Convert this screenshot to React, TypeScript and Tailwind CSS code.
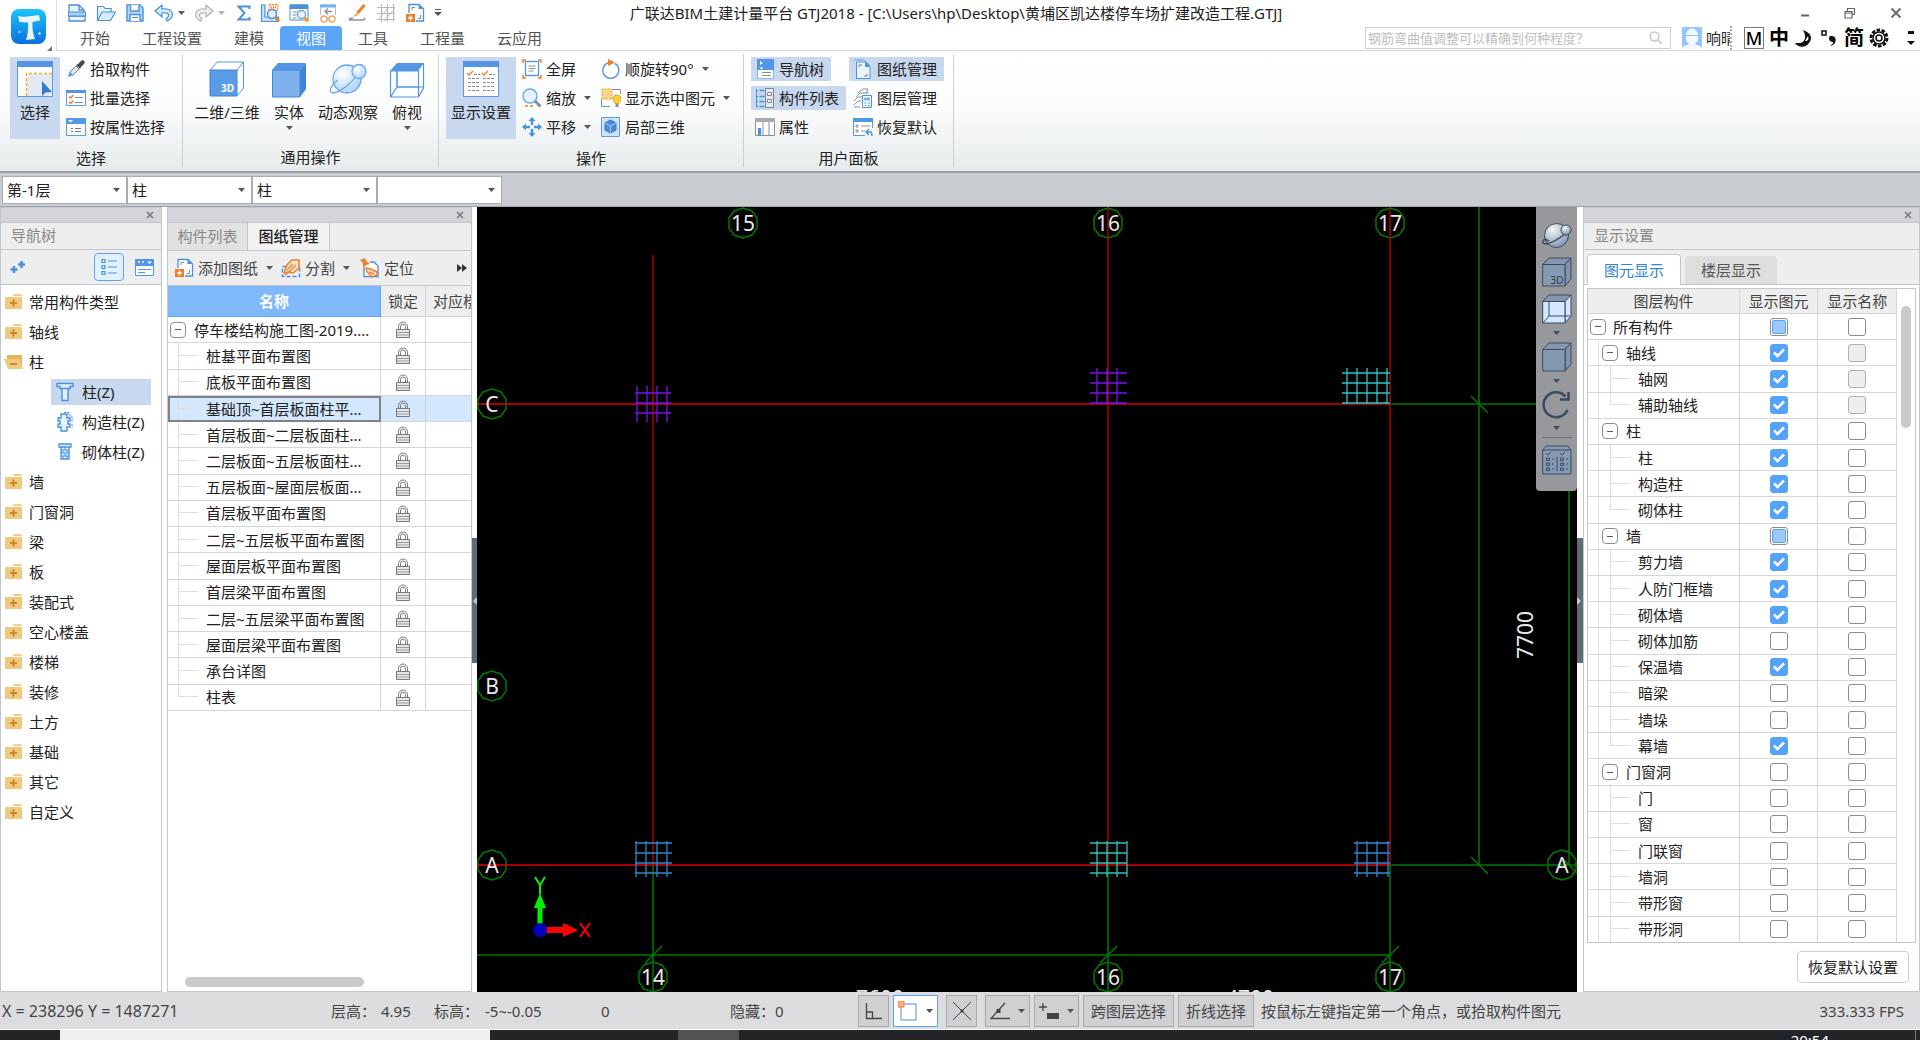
import { useState } from "react";
import type { ReactNode } from "react";

const BLUE = "#4a90dc";
const ORANGE = "#f07d28";

/* ---------- icons ---------- */

function Svg({ w = 20, h = 20, box, children }: { w?: number; h?: number; box?: string; children: ReactNode }) {
	return (
		<svg width={w} height={h} viewBox={box ?? `0 0 ${w} ${h}`} fill="none" className="shrink-0" aria-hidden="true">
			{children}
		</svg>
	);
}

function Caret({ color = "#555555" }: { color?: string }) {
	return (
		<Svg w={7} h={4}>
			<path d="M0 0h7L3.500 4z" fill={color} />
		</Svg>
	);
}

const Logo = () => (
	<Svg w={36} h={36}>
		<defs>
			<linearGradient id="logo" x1="0" y1="0" x2="0" y2="1">
				<stop offset="0" stopColor="#1cc4fa" />
				<stop offset="1" stopColor="#0b6fe0" />
			</linearGradient>
		</defs>
		<rect width="35" height="35" rx="8" fill="url(#logo)" />
		<path d="M7 7c6 1.500 14 0 21-1l1 5.500-7.500 1.500c-.5 5 .5 12 2.500 17l-9 1c2-6 2.500-12 2-17.500L8.500 13z" fill="#e9f5ff" />
		<circle cx="8.500" cy="23" r="1" fill="#d8efff" />
		<circle cx="28.500" cy="24.500" r="1.200" fill="#d8efff" />
	</Svg>
);

const NewFileIcon = () => (
	<Svg>
		<path d="M2 9V2h10l5 5v2M12 2v5h5" stroke={BLUE} fill="#eaf4ff" strokeWidth="1.300" />
		<path d="M2 13h16v5H2z" fill="#eaf4ff" stroke={BLUE} strokeWidth="1.300" />
		<rect x="1.500" y="9" width="17" height="4" fill="#a8d0fa" stroke={BLUE} />
	</Svg>
);
const OpenIcon = () => (
	<Svg>
		<path d="M1.500 17V3.500h6l1.500 2h6V9" stroke={BLUE} fill="#eaf4ff" strokeWidth="1.200" />
		<path d="M1.500 17.500 6 9h13.500l-5 8.500z" stroke={BLUE} fill="#d8eafd" strokeWidth="1.200" />
	</Svg>
);
const SaveIcon = () => (
	<Svg>
		<path d="M2 2h13l3 3v13H2z" fill="#b5d7fb" stroke={BLUE} strokeWidth="1.400" />
		<path d="M5.500 2v6h8.500V2M5 18v-6.500h10V18" fill="#fff" stroke={BLUE} strokeWidth="1.400" />
		<path d="M7 14.500h6" stroke={BLUE} />
	</Svg>
);
const UndoIcon = ({ color = BLUE, fill = "#d3e8fd" }: { color?: string; fill?: string }) => (
	<Svg>
		<path d="M1 8 8 2v4c6-1 10 1.500 10.500 5 0 4-3 6-5.500 7l-1-2.500c2-1 3-2.500 2.500-4-.5-1.500-3-2-6.500-1.500V14z" fill={fill} stroke={color} strokeWidth="1.200" />
	</Svg>
);
const RedoIcon = () => (
	<Svg>
		<g transform="matrix(-1 0 0 1 20 0)">
			<path d="M1 8 8 2v4c6-1 10 1.500 10.500 5 0 4-3 6-5.500 7l-1-2.500c2-1 3-2.500 2.500-4-.5-1.500-3-2-6.500-1.500V14z" fill="#ececec" stroke="#b4b4b4" strokeWidth="1.200" />
		</g>
	</Svg>
);
const SumIcon = () => (
	<Svg w={14} h={16}>
		<path d="M12.500 4V1.500H1.500L7.500 8l-6 6.500h11V12" stroke={BLUE} strokeWidth="2" />
	</Svg>
);
const CraneIcon = () => (
	<Svg>
		<path d="M1.500 2v16.500h17V14H5V2z" fill="#c9e1fb" stroke={BLUE} strokeWidth="1.200" />
		<path d="M9 1.500h9v6H9z" fill="#fde5d2" stroke={ORANGE} strokeDasharray="2 1" />
		<path d="M11 4.500h5" stroke={ORANGE} strokeWidth="1.500" strokeDasharray="1 1" />
		<circle cx="12" cy="11" r="4.500" fill="#ddeeff" stroke={BLUE} strokeWidth="1.500" />
		<path d="m15.500 14.500 3.500 3.500" stroke={ORANGE} strokeWidth="3" />
	</Svg>
);
const FindWindowIcon = () => (
	<Svg>
		<path d="M1 2h18v15H1z" fill="#fff" stroke={BLUE} />
		<path d="M1 1.500h18V6H1z" fill={BLUE} />
		<path d="M3.500 9h5M3.500 12h4M3.500 15h4" stroke="#8a8f96" />
		<circle cx="12.500" cy="11.500" r="4" fill="#e4f1ff" stroke="#7fa6d6" strokeWidth="1.500" />
		<path d="m15.500 14.500 3.500 4" stroke="#f59a1c" strokeWidth="3" />
	</Svg>
);
const GlassesIcon = () => (
	<Svg>
		<path d="M2.500 12V2h15v10" fill="#fff" stroke="#9cc3ef" />
		<path d="M2 1.500h16v3H2z" fill="#79b0ee" />
		<path d="M14 8.500H7m3-3-3 3 3 3" stroke="#8a8f96" strokeWidth="1.300" />
		<circle cx="6" cy="16" r="3" stroke="#f6a673" strokeWidth="1.500" fill="#fff" />
		<circle cx="14" cy="16" r="3" stroke="#f6a673" strokeWidth="1.500" fill="#fff" />
		<path d="M9 16h2" stroke="#f6a673" strokeWidth="1.500" />
	</Svg>
);
const BrushIcon = () => (
	<Svg>
		<path d="m17.500 2-7 8" stroke={ORANGE} strokeWidth="3" />
		<path d="m10 9.500-4 4.500 5-2z" fill="#f5a623" />
		<path d="M6 15c-3 0-5 2-3 2h13c2 0 2-1 1-2" stroke="#8a8f96" strokeWidth="1.500" />
	</Svg>
);
const MeshIcon = () => (
	<Svg>
		<path d="M5.500 1v18M11.500 1v18M17.500 1v18M1 4.500h18M1 10.500h18M1 16.500h18M2 17 12 5M8 18 19 5" stroke="#b9b9b9" />
	</Svg>
);
const AddSheetIcon = () => (
	<Svg>
		<path d="M4 10V1.500h10l4.500 4.500v12H11" fill="#fff" stroke={BLUE} strokeWidth="1.300" />
		<path d="M13.500 1.500V6h5z" fill={BLUE} />
		<path d="M7 7V4.500h3M15.500 12v3.500H13" stroke="#7f8b99" />
		<path d="M1 11h9v8H1z" fill={ORANGE} />
		<path d="M5.500 12.500v5M3 15h5" stroke="#fff" strokeWidth="1.400" />
	</Svg>
);

const SelectBigIcon = () => (
	<Svg w={38} h={38}>
		<path d="M1.500 1.500h35v35h-35z" fill="#fdfdfd" stroke="#5b9be6" />
		<path d="M1 1h36v6H1z" fill="#5296e5" />
		<path d="M11 14h25v22H11z" fill="#e4e9f4" />
		<path d="M10.500 36V13.500H36" stroke="#f0b323" strokeWidth="1.500" strokeDasharray="3 2" />
		<path d="M26 21v15l3.500-3.500L36 32z" fill="#2f7bd0" />
	</Svg>
);
const DisplayBigIcon = () => (
	<Svg w={38} h={38}>
		<path d="M1.500 1.500h35v35h-35z" fill="#fff" stroke="#5b9be6" />
		<path d="M1 1h36v6H1z" fill="#5296e5" />
		<path d="m5 13 2 2 4-4M20 13l2 2 4-4" stroke={ORANGE} strokeWidth="1.300" />
		<path d="M12 14.500h6M27 14.500h6M6 18.500h12M21 18.500h12M6 22.500h12M21 22.500h12M6 26.500h12M21 26.500h12M6 30.500h12M21 30.500h12" stroke="#8a8f96" strokeDasharray="3 1" />
	</Svg>
);
const Cube3DIcon = () => (
	<Svg w={36} h={38}>
		<path d="M1.500 10 8 2h26.500v26L28 36" fill="#fff" stroke="#5296e5" />
		<path d="M28 10 34.500 2" stroke="#5296e5" />
		<path d="M1 10h27v26H1z" fill="#5a9be8" stroke="#3f84d6" />
		<text x="12" y="32" fontSize="10" fontWeight="700" fill="#fff">3D</text>
	</Svg>
);
const CubeSolidIcon = () => (
	<Svg w={36} h={38}>
		<path d="M1 10 7 3h28l-6 7z" fill="#5296e5" />
		<path d="m29 10 6-7v26l-6 8z" fill="#3f84d6" />
		<path d="M1.500 10H29v27H1.500z" fill="#7fb1ed" stroke="#4289dc" />
	</Svg>
);
const OrbitIcon = () => (
	<Svg w={38} h={32}>
		<defs>
			<radialGradient id="orb" cx=".35" cy=".3" r=".8">
				<stop offset="0" stopColor="#ffffff" />
				<stop offset="1" stopColor="#a9d0fa" />
			</radialGradient>
		</defs>
		<circle cx="18" cy="16" r="14" fill="url(#orb)" stroke="#69a6ea" strokeWidth="1.300" />
		<path d="M28 12c-6 9-17 17-24 18-6-1-1-9 5-13" stroke="#69a6ea" strokeWidth="1.300" />
		<circle cx="30" cy="8.500" r="7" fill="url(#orb)" stroke="#69a6ea" strokeWidth="1.300" />
	</Svg>
);
const TopViewIcon = () => (
	<Svg w={36} h={38}>
		<path d="M1.500 11h28v26h-28zM34.500 3v25l-5 9M8 4v23h26M8 27l-6.500 10" fill="#fff" stroke="#5296e5" strokeWidth="1.200" />
		<path d="M8 11v16h21" stroke="#5296e5" />
		<path d="M1 11 8 3h27l-6 8z" fill="#5296e5" />
	</Svg>
);

const PickerIcon = () => (
	<Svg>
		<path d="m3 17 1-4 6-6 3 3-6 6z" fill="#dfe7ef" stroke="#777c82" />
		<path d="m2 18 2-5 3 3z" fill="#4ea3e8" />
		<path d="m10 6 2-1 3-3c2-2 5 1 3 3l-3 3-1 2z" fill="#444a50" />
	</Svg>
);
const BatchIcon = () => (
	<Svg>
		<path d="M.5 2.500h19v15H.5z" fill="#fff" stroke="#5b9be6" />
		<path d="M0 2h20v3H0z" fill="#5296e5" />
		<path d="m3 8.500 1.500 1.500L7.500 7M3 14l1.500 1.500 3-3" stroke={ORANGE} strokeWidth="1.300" />
		<path d="M9 9.500h8M9 14.500h8" stroke="#8a8f96" />
	</Svg>
);
const ByPropIcon = () => (
	<Svg>
		<path d="M.5 1.500h19v17H.5z" fill="#fff" stroke="#5b9be6" />
		<path d="M0 1h20v6H0z" fill="#5296e5" />
		<path d="M2 3h5L4.500 5.500z" fill="#fff" />
		<path d="M5 11.500h2M9 11.500h6M5 14.500h2M9 14.500h6" stroke="#777" />
	</Svg>
);
const FullScreenIcon = () => (
	<Svg>
		<path d="M1 4V1h3M16 1h3v3M19 16v3h-3M4 19H1v-3" stroke={ORANGE} strokeWidth="1.500" />
		<path d="M3.500 2.500h13v14h-13z" fill="#fff" stroke="#5b9be6" strokeWidth="1.300" />
		<path d="M6.500 7h7M6.500 9.500h7M6.500 12h5" stroke="#8a8f96" />
	</Svg>
);
const ZoomIcon = () => (
	<Svg>
		<circle cx="8" cy="8" r="7" fill="#e6f2ff" stroke="#6aa6ea" strokeWidth="1.400" />
		<path d="m13 13 5.500 5.500" stroke="#878c92" strokeWidth="3" />
		<path d="M3 18h3M8 18h3" stroke={ORANGE} strokeWidth="1.500" />
	</Svg>
);
const PanIcon = () => (
	<Svg>
		<path d="m10 0 3.500 4h-7zM10 20l3.500-4h-7zM0 10l4-3.500v7zM20 10l-4-3.500v7z" fill={BLUE} />
		<path d="M10 3v5M10 12v5M3 10h5M12 10h5" stroke={BLUE} strokeWidth="2.500" />
	</Svg>
);
const RotateIcon = () => (
	<Svg>
		<path d="M8 3.500a8 8 0 1 0 6 1" stroke="#5b9be6" strokeWidth="1.500" />
		<path d="M7 0v7l7-3.500z" fill={ORANGE} />
	</Svg>
);
const ShowSelIcon = () => (
	<Svg>
		<path d="M10 1.500h9.500V6M.5 11v7.500H9" stroke="#8a8f96" />
		<path d="M1 1h10v10H1z" fill="#fbd58b" stroke="#e9a53a" strokeDasharray="2 1" />
		<path d="M16 7a4 4 0 0 1 2 7.500v1h-4v-1A4 4 0 0 1 16 7z" fill="#ffcd3c" stroke="#e0a521" />
		<path d="M14.500 16h3v3h-3z" fill="#8a8f96" />
	</Svg>
);
const LocalCubeIcon = () => (
	<Svg>
		<path d="M.5.5h18v19H.5z" fill="#cfe2f8" stroke="#5b9be6" />
		<path d="m9.500 3 5.500 3v7l-5.500 3L4 13V6z" fill="#4a8edb" stroke="#2f73c2" />
		<path d="m4 6 5.500 3L15 6M9.500 9v7" stroke="#a9cdf5" />
	</Svg>
);
const NavTreeIcon = () => (
	<Svg>
		<path d="M2.500.5h16v19h-16z" fill="#fff" stroke="#8ab6ea" />
		<path d="M2 0h17v11H2z" fill="#5296e5" />
		<path d="m5 2 3 2-3 2zM4.500 8.500h4l-2 2z" fill="#fff" />
		<path d="M7 13.500h9M7 16.500h9" stroke="#8a8f96" />
	</Svg>
);
const ListPanelIcon = () => (
	<Svg>
		<path d="M10.500.5h8v19h-8z" fill="#e8eaee" stroke="#7d858f" />
		<path d="M1.500 1v18M1 2.500h2M1 8.500h2M1 13.500h2M1 18.500h2" stroke={BLUE} />
		<path d="M4.500 2.500h5M4.500 8.500h5M4.500 13.500h5M4.500 18.500h5" stroke={BLUE} strokeWidth="1.500" />
		<path d="M12.500 4.500h4v3h-4zM12.500 11.500h4v3h-4z" fill="#fff" stroke="#7d858f" />
	</Svg>
);
const PropIcon = () => (
	<Svg>
		<path d="M.5 1.500h19v17H.5z" fill="#fff" stroke="#8a8f96" />
		<path d="M0 1h20v4H0z" fill="#a7abb1" />
		<path d="M8 5v13M14 5v13" stroke="#8a8f96" />
		<path d="M3 11h3v7H3z" fill={BLUE} />
	</Svg>
);
const SheetMgrIcon = () => (
	<Svg>
		<path d="M1.500 1h9l6 5v12h-4" fill="#d5e7fb" stroke="#5b9be6" />
		<path d="M3.500 3h9l4.500 5v11.500H3.500z" fill="#eaf4ff" stroke={BLUE} />
		<path d="M12 3v5h5z" fill={BLUE} />
		<path d="M6 8V6h3M14 15v2h-3" stroke="#7d858f" />
	</Svg>
);
const LayerMgrIcon = () => (
	<Svg>
		<path d="m5 5 5-4h5l-2 4M3 9l4-4h9M1 13l4-4h5M1 17l4-4h3M1 19h6" stroke="#8a8f96" />
		<path d="M9.500 7.500h9v12h-9z" fill="#fff" stroke={BLUE} />
		<path d="M11 9.500h6v3h-6z" fill="#7fb1ed" />
		<path d="M11.500 15h2M15 15h2M11.500 17.500h2M15 17.500h2" stroke={BLUE} />
	</Svg>
);
const ResetIcon = () => (
	<Svg>
		<path d="M19.500 11V1.500H.5v17H12" fill="#fff" stroke="#5b9be6" />
		<path d="M0 1h20v4H0z" fill="#5296e5" />
		<path d="M3 8h2v2H3zM3 13h2v2H3zM8 9h9M8 14h4" stroke="#8a8f96" />
		<path d="M14 15h3.500c1.500 0 1.500 2 1.500 4M16 12l-3 3 3 3" stroke={BLUE} strokeWidth="1.400" />
	</Svg>
);

const SplitIcon = () => (
	<Svg>
		<path d="M1.500 8.500h17v10h-17z" stroke={BLUE} strokeDasharray="4 2" strokeWidth="1.500" />
		<path d="m3 15 3-8 5-5h7v8l-6 5-5-1z" fill="#ffe3cd" stroke={ORANGE} strokeWidth="1.500" />
		<path d="m6 12 6-6M8 14l7-7M4 17l5-4" stroke={ORANGE} strokeWidth="1.300" />
	</Svg>
);
const LocateIcon = () => (
	<Svg>
		<path d="M4 9v9.500h14V8l-4-4h-4" fill="#fff" stroke={BLUE} strokeWidth="1.300" />
		<path d="m0 2 5-2 1 3 4 3-4 1-3 3V5z" fill={ORANGE} />
		<path d="m6 10 5 1 6 3v3l-5 2-5-5zM9 14l5 2" fill="#ffe3cd" stroke={ORANGE} strokeWidth="1.400" />
	</Svg>
);

function FolderIcon({ open }: { open?: boolean }) {
	if (open) {
		return (
			<Svg w={20} h={16}>
				<path d="M3 5V1h15v13z" fill="#e3b45c" />
				<path d="M0 5h16l3 10H4z" fill="#f0c97f" />
				<path d="M6 10h7" stroke="#b9812b" strokeWidth="1.600" />
			</Svg>
		);
	}
	return (
		<Svg w={20} h={16}>
			<path d="m9 1 1-1h7l1 1v1H9z" fill="#f3cd8a" />
			<path d="M1 3h17v12H1z" fill="#f0c97f" />
			<path d="M9.500 5.500v7M6 9h7" stroke="#c48a2c" strokeWidth="2" />
		</Svg>
	);
}
const ColumnIcon = () => (
	<Svg w={18} h={20}>
		<path d="M1 1.500h16v3h-3v2H4v-2H1zM6 6.500h6v12H6z" fill="#e6f1fd" stroke={BLUE} strokeWidth="1.400" />
	</Svg>
);
const TieColumnIcon = () => (
	<Svg w={18} h={20}>
		<path d="M5 2h6v4h3v3h-2v3h2v3h-3v4H5v-4H2v-3h2V9H2V6h3z" fill="#e6f1fd" stroke={BLUE} strokeWidth="1.400" />
		<path d="M8 .5h5V4h3v6M16 12v4" stroke={BLUE} strokeDasharray="2 1" />
	</Svg>
);
const BrickColumnIcon = () => (
	<Svg w={18} h={20}>
		<path d="M3 2h12v3H3zM5 5h8v12H5z" fill="#e6f1fd" stroke={BLUE} strokeWidth="1.300" />
		<path d="M5 8h8M5 11h8M5 14h8M9 5v3M7 8v3M11 8v3M9 11v3M7 14v3M11 14v3" stroke={BLUE} />
	</Svg>
);
const LockIcon = () => (
	<Svg w={14} h={17}>
		<path d="M2.500 8V5.500a4.500 4.500 0 0 1 9 0V8M4.500 8V5.500a2.500 2.500 0 0 1 5 0V8" stroke="#77797c" />
		<path d="M.5 8.500h13v8H.5z" fill="#e6e6e8" stroke="#77797c" />
		<path d="M1 11.500h12M1 14h12" stroke="#9a9c9f" />
	</Svg>
);

const DARK = "#3b4a5e";
const GrayCube = ({ text, wire }: { text?: string; wire?: boolean }) => (
	<Svg w={30} h={30}>
		<path d="M.7 7.500 7 1h22L23 7.500z" fill="#8496af" stroke={DARK} />
		<path d="M23 7.500 29 1v21l-6 7z" fill={wire ? "#d3e8ff" : "#8093ac"} stroke={DARK} />
		<path d="M.7 7.500H23V29H.7z" fill={wire ? "#d3e8ff" : "#8699b3"} stroke={DARK} />
		{wire && <path d="M7 8v14h21M7 22l-6 7" stroke={DARK} />}
		{text && <text x="8.500" y="26.500" fontSize="10" fill="#2e3a4a">{text}</text>}
	</Svg>
);
const GrayOrbit = () => (
	<Svg w={30} h={27}>
		<defs>
			<radialGradient id="gorb" cx=".35" cy=".25" r=".8">
				<stop offset="0" stopColor="#f5f7fa" />
				<stop offset="1" stopColor="#7e92ac" />
			</radialGradient>
		</defs>
		<circle cx="14.500" cy="13.500" r="12" fill="url(#gorb)" stroke={DARK} />
		<path d="M24 11C17 17 9 21 4 22c-4 0-4-3-1-5l4 2" stroke={DARK} strokeWidth="1.400" />
		<circle cx="24" cy="8" r="5" fill="url(#gorb)" stroke={DARK} />
	</Svg>
);
const GrayRotate = () => (
	<Svg w={30} h={29}>
		<path d="M23.500 6.500A12.500 12.500 0 1 0 25.500 20" stroke={DARK} strokeWidth="2.500" />
		<path d="M26.500 2v7.500H18" stroke={DARK} strokeWidth="2.500" />
	</Svg>
);
const GraySettings = () => (
	<Svg w={30} h={30}>
		<path d="M.7 5 4 1h22l3 4v24H.7z" fill="#8699b3" stroke={DARK} />
		<path d="M1 5h28M15 12v14M4 8l2 2 3-3M18 8l2 2 3-3" stroke={DARK} />
		<path d="M4.500 13h3v2.500h-3zM4.500 18h3v2.500h-3zM4.500 23h3v2.500h-3zM18.500 13h3v2.500h-3zM18.500 18h3v2.500h-3zM18.500 23h3v2.500h-3zM10 14h2M10 19h2M10 24h2M24 14h2M24 19h2M24 24h2" stroke={DARK} />
	</Svg>
);

/* ---------- header ---------- */

const tabs = ["开始", "工程设置", "建模", "视图", "工具", "工程量", "云应用"];

function IconButton({ label, children }: { label: string; children: ReactNode }) {
	return (
		<button type="button" aria-label={label} className="flex h-5 items-center justify-center">
			{children}
		</button>
	);
}

function Header() {
	const [tab, setTab] = useState("视图");
	return (
		<header className="flex h-[51px] shrink-0 bg-white">
			<div className="flex w-[57px] shrink-0 items-end border-r border-[#dcdcdc]">
				<div className="ml-[11px] mb-1.5">
					<Logo />
				</div>
				<Svg w={5} h={5}>
					<path d="M5 0v5H0z" fill="#777" />
				</Svg>
			</div>
			<div className="flex min-w-0 flex-1 flex-col border-b border-[#dadada]">
				<div className="flex h-[27px] items-center">
					<div className="flex flex-1 items-center pl-2.5">
						<div className="flex items-center gap-[9px]">
							<IconButton label="新建"><NewFileIcon /></IconButton>
							<IconButton label="打开"><OpenIcon /></IconButton>
							<IconButton label="保存"><SaveIcon /></IconButton>
							<div className="flex items-center gap-1">
								<IconButton label="撤销"><UndoIcon /></IconButton>
								<Caret />
							</div>
							<div className="flex items-center gap-1">
								<IconButton label="恢复"><RedoIcon /></IconButton>
								<Caret color="#b5b5b5" />
							</div>
						</div>
						<div className="ml-3 flex items-center gap-[9px]">
							<IconButton label="汇总"><SumIcon /></IconButton>
							<IconButton label="查看构件"><CraneIcon /></IconButton>
							<IconButton label="查找"><FindWindowIcon /></IconButton>
							<IconButton label="查看"><GlassesIcon /></IconButton>
							<IconButton label="格式刷"><BrushIcon /></IconButton>
							<IconButton label="轴网"><MeshIcon /></IconButton>
							<IconButton label="添加图纸"><AddSheetIcon /></IconButton>
							<IconButton label="自定义快速访问">
								<Svg w={8} h={8}>
									<path d="M1 .5h6" stroke="#555" />
									<path d="M0 3h8L4 7z" fill="#555" />
								</Svg>
							</IconButton>
						</div>
					</div>
					<h1 className="whitespace-nowrap pr-[57px] text-[15px] leading-6 text-[#222]">
						广联达BIM土建计量平台 GTJ2018 - [C:\Users\hp\Desktop\黄埔区凯达楼停车场扩建改造工程.GTJ]
					</h1>
					<div className="flex flex-1 items-center justify-end gap-[35px] pr-[18px]">
						<button type="button" aria-label="最小化" className="flex">
							<Svg w={8} h={10}><path d="M0 7.500h8" stroke="#666" strokeWidth="2" /></Svg>
						</button>
						<button type="button" aria-label="还原" className="flex">
							<Svg w={11} h={12}><path d="M3.500 4V1.500h7v6H8M1 4.500h7V11H1zM1 6h7" stroke="#666" strokeWidth="1.200" /></Svg>
						</button>
						<button type="button" aria-label="关闭" className="flex">
							<Svg w={12} h={12}><path d="m1.500 1.500 9 9m0-9-9 9" stroke="#666" strokeWidth="1.800" /></Svg>
						</button>
					</div>
				</div>
				<div className="flex h-6 items-center">
					<nav className="flex flex-1 self-stretch pl-[7px]" role="tablist">
						{tabs.map((t) => (
							<button
								key={t}
								type="button"
								role="tab"
								aria-selected={t === tab}
								onClick={() => setTab(t)}
								className={
									t === tab
										? "rounded-t-sm bg-[#5aa5f7] px-4 text-[15px] leading-6 text-white"
										: "px-4 text-[15px] leading-6 text-[#555]"
								}
							>
								{t}
							</button>
						))}
					</nav>
					<label className="flex h-[22px] w-[306px] items-center border border-[#cfcfcf] bg-white pr-2">
						<input
							type="text"
							aria-label="搜索"
							placeholder="钢筋弯曲值调整可以精确到何种程度？"
							className="min-w-0 flex-1 pl-0.5 text-[13px] leading-5 outline-none placeholder:text-[#bdbdbd]"
						/>
						<Svg w={13} h={14}>
							<circle cx="5.500" cy="5.500" r="4.500" stroke="#c4c4c4" strokeWidth="1.400" />
							<path d="m9 9 3.500 4" stroke="#c4c4c4" strokeWidth="1.600" />
						</Svg>
					</label>
					<div className="ml-[11px] flex h-6 w-12 items-center gap-1 overflow-hidden">
						<Svg w={20} h={22}>
							<path d="M0 0h20v22H0z" fill="#93c7ff" />
							<path d="M4 9c0-10 12-10 12 0v3c0 3-3 4-3 5l7 3v2H0v-2l7-3c0-1-3-2-3-5z" fill="#f2f8ff" />
							<path d="M4 8.500h12" stroke="#93c7ff" />
						</Svg>
						<span className="whitespace-nowrap text-[15px] leading-5 text-[#222]">响晴</span>
					</div>
					<div className="flex h-6 w-[190px] items-center gap-[5px] border-l-2 border-dotted border-[#aaa] pl-3 text-lg leading-6 font-medium text-black">
						<span className="h-[22px] w-5 border border-[#777] text-center leading-5">M</span>
						<span className="w-5 text-center text-xl leading-6 font-bold">中</span>
						<Svg w={20} h={20}><path d="M9 2c8 3 10 8 6 13-3 5-11 5-14 0h5c5-1 7-6 3-13z" fill="#111" /><path d="m11 13 3-5c1 3 0 5-3 5z" fill="#fff" /></Svg>
						<Svg w={20} h={20}><path d="M3 3h4v4H3z" stroke="#111" strokeWidth="1.500" /><path d="M11 8c8-1 7 8 1 10-1-1 3-2 2-4-4 0-5-4-3-6z" fill="#111" /></Svg>
						<span className="w-5 text-center text-xl leading-6 font-bold">简</span>
						<Svg w={20} h={20}>
							<circle cx="10" cy="10" r="8" stroke="#111" strokeWidth="3" strokeDasharray="3.500 1.500" />
							<circle cx="10" cy="10" r="6" stroke="#111" strokeWidth="1.500" />
							<circle cx="10" cy="10" r="3" stroke="#111" strokeWidth="1.500" />
						</Svg>
						<span className="flex-1" />
						<span className="mr-1 flex">
							<Svg w={10} h={18}><path d="M2 3.500h6" stroke="#111" strokeWidth="3" /><path d="M1 12h8l-4 4z" fill="#111" /></Svg>
						</span>
					</div>
				</div>
			</div>
		</header>
	);
}

/* ---------- ribbon ---------- */

function Group({ label, className, children }: { label: string; className: string; children: ReactNode }) {
	return (
		<section className={`flex shrink-0 flex-col border-r border-[#cdd0d2] pt-[3px] ${className}`}>
			<div className="flex h-[84px]">{children}</div>
			<div className="mt-[9px] text-center text-[15px] leading-5 text-[#222]">{label}</div>
		</section>
	);
}

function BigButton({ icon, label, active, caret, className }: { icon: ReactNode; label: string; active?: boolean; caret?: boolean; className: string }) {
	return (
		<button
			type="button"
			aria-pressed={!!active}
			className={`flex flex-col items-center pt-[3px] text-[15px] text-[#222] ${active ? "bg-[#c8d8ef]" : ""} ${className}`}
		>
			<span className="flex h-[38px] items-center">{icon}</span>
			<span className="mt-1 whitespace-nowrap leading-5">{label}</span>
			{caret && <span className="mt-1"><Caret /></span>}
		</button>
	);
}

function SmallButton({ icon, label, active, caret, wide }: { icon: ReactNode; label: string; active?: boolean; caret?: boolean; wide?: boolean }) {
	return (
		<button
			type="button"
			aria-pressed={!!active}
			className={`flex h-6 items-center gap-1 text-[15px] leading-6 whitespace-nowrap text-[#222] ${active ? "bg-[#c8d8ef]" : ""} ${wide ? "pl-1 pr-[7px]" : "px-0.5"}`}
		>
			{icon}
			<span>{label}</span>
			{caret && <span className="ml-1"><Caret /></span>}
		</button>
	);
}

function Ribbon() {
	return (
		<div className="flex h-[122px] shrink-0 border-b-2 border-[#9da1a6] bg-linear-to-b from-white via-[#fbfcfc] to-[#e6ebeb] pt-[3px] pb-1">
			<Group label="选择" className="w-[183px]">
				<div className="flex pl-2.5">
					<BigButton icon={<SelectBigIcon />} label="选择" active className="w-[50px]" />
					<div className="ml-1 flex flex-col items-start gap-[5px]">
						<SmallButton icon={<PickerIcon />} label="拾取构件" />
						<SmallButton icon={<BatchIcon />} label="批量选择" />
						<SmallButton icon={<ByPropIcon />} label="按属性选择" />
					</div>
				</div>
			</Group>
			<Group label="通用操作" className="w-64">
				<div className="flex gap-[7px] pl-[11px]">
					<BigButton icon={<Cube3DIcon />} label="二维/三维" className="w-[66px]" />
					<BigButton icon={<CubeSolidIcon />} label="实体" caret className="w-11" />
					<BigButton icon={<OrbitIcon />} label="动态观察" className="w-[60px]" />
					<BigButton icon={<TopViewIcon />} label="俯视" caret className="w-11" />
				</div>
			</Group>
			<Group label="操作" className="w-[305px]">
				<div className="flex pl-[7px]">
					<BigButton icon={<DisplayBigIcon />} label="显示设置" active className="w-[70px]" />
					<div className="ml-1 flex w-[79px] flex-col items-start gap-[5px]">
						<SmallButton icon={<FullScreenIcon />} label="全屏" />
						<SmallButton icon={<ZoomIcon />} label="缩放" caret />
						<SmallButton icon={<PanIcon />} label="平移" caret />
					</div>
					<div className="flex flex-col items-start gap-[5px]">
						<SmallButton icon={<RotateIcon />} label="顺旋转90°" caret />
						<SmallButton icon={<ShowSelIcon />} label="显示选中图元" caret />
						<SmallButton icon={<LocalCubeIcon />} label="局部三维" />
					</div>
				</div>
			</Group>
			<Group label="用户面板" className="w-[210px]">
				<div className="flex pl-[7px]">
					<div className="flex flex-col items-start gap-[5px]">
						<SmallButton icon={<NavTreeIcon />} label="导航树" active wide />
						<SmallButton icon={<ListPanelIcon />} label="构件列表" active wide />
						<SmallButton icon={<PropIcon />} label="属性" wide />
					</div>
					<div className="ml-[3px] flex flex-col items-start gap-[5px]">
						<SmallButton icon={<SheetMgrIcon />} label="图纸管理" active wide />
						<SmallButton icon={<LayerMgrIcon />} label="图层管理" wide />
						<SmallButton icon={<ResetIcon />} label="恢复默认" wide />
					</div>
				</div>
			</Group>
		</div>
	);
}

function Selectors() {
	const items = [
		{ label: "楼层", value: "第-1层" },
		{ label: "构件类别", value: "柱" },
		{ label: "构件类型", value: "柱" },
		{ label: "构件", value: "" },
	];
	return (
		<div className="flex h-[34px] shrink-0 items-center border-b border-[#9da5ab] bg-[#c9ccd1] pl-0.5">
			{items.map((it) => (
				<div key={it.label} className="flex h-7 w-[125px] items-center border border-[#a9acb0] bg-white pr-1.5">
					<select aria-label={it.label} className="min-w-0 flex-1 appearance-none pl-1 text-[15px] leading-6 text-[#222] outline-none">
						<option>{it.value}</option>
					</select>
					<Caret />
				</div>
			))}
		</div>
	);
}

/* ---------- left panels ---------- */

function PanelStrip() {
	return (
		<div className="flex h-[15px] shrink-0 items-center justify-end border-b border-[#c3c6ca] bg-[#d3d5da] pr-[7px]">
			<button type="button" aria-label="关闭面板" className="flex">
				<Svg w={8} h={8}><path d="m1 1 6 6m0-6L1 7" stroke="#777" strokeWidth="1.500" /></Svg>
			</button>
		</div>
	);
}

const navBefore = ["常用构件类型", "轴线"];
const navAfter = ["墙", "门窗洞", "梁", "板", "装配式", "空心楼盖", "楼梯", "装修", "土方", "基础", "其它", "自定义"];

function NavItem({ label, open }: { label: string; open?: boolean }) {
	return (
		<button type="button" className="flex h-[30px] items-center gap-[5px] pl-[3px] text-[15px] leading-5 text-[#222]">
			<FolderIcon open={open} />
			{label}
		</button>
	);
}

function NavSub({ icon, label, active }: { icon: ReactNode; label: string; active?: boolean }) {
	return (
		<li className="flex h-[30px] items-center pl-[50px]">
			<button type="button" className={`flex h-[26px] w-[100px] items-center gap-2 pl-[5px] text-[15px] leading-5 whitespace-nowrap text-[#222] ${active ? "bg-[#c8d8ef]" : ""}`}>
				{icon}
				{label}
			</button>
		</li>
	);
}

function NavPanel() {
	return (
		<aside className="flex w-[162px] shrink-0 flex-col border border-[#c3c6ca] bg-white">
			<PanelStrip />
			<h2 className="h-[27px] border-b border-[#c3c6ca] bg-[#eeeeef] pl-2.5 text-[15px] leading-[25px] text-[#888]">导航树</h2>
			<div className="flex h-[35px] items-center border-b border-[#c3c6ca] bg-[#eeeeef] pl-[9px]">
				<button type="button" aria-label="展开" className="flex flex-1">
					<Svg w={16} h={14}><path d="M4 6v7M.5 9.500h7M11.500 1v7M8 4.500h7" stroke={BLUE} strokeWidth="2.500" /></Svg>
				</button>
				<button type="button" aria-label="列表" className="flex h-7 w-[30px] items-center justify-center rounded border border-[#5aa5f7] bg-[#e2f0ff]">
					<Svg w={16} h={18}>
						<path d="M1 1.500h3v3H1zM1 7.500h3v3H1zM1 13.500h3v3H1zM7 3h9M7 9h9M7 15h9" stroke={BLUE} strokeWidth="1.200" />
					</Svg>
				</button>
				<button type="button" aria-label="窗口" className="mr-[7px] ml-[11px] flex">
					<Svg w={19} h={17}>
						<path d="M.5.5h18v16H.5z" fill="#fff" stroke="#5296e5" />
						<path d="M0 0h19v7H0z" fill="#5296e5" />
						<path d="M3 3h2M7 3h2" stroke="#fff" strokeWidth="1.500" />
						<path d="M12 2.500h5L14.500 5z" fill="#fff" />
						<path d="M3 10.500h13M3 13.500h7" stroke="#5296e5" />
					</Svg>
				</button>
			</div>
			<ul className="flex-1 pt-0.5">
				{navBefore.map((n) => (
					<li key={n}><NavItem label={n} /></li>
				))}
				<li><NavItem label="柱" open /></li>
				<NavSub icon={<ColumnIcon />} label="柱(Z)" active />
				<NavSub icon={<TieColumnIcon />} label="构造柱(Z)" />
				<NavSub icon={<BrickColumnIcon />} label="砌体柱(Z)" />
				{navAfter.map((n) => (
					<li key={n}><NavItem label={n} /></li>
				))}
			</ul>
		</aside>
	);
}

function Minus() {
	return (
		<button type="button" aria-label="折叠" className="flex h-4 w-4 shrink-0 items-center justify-center rounded-sm border border-[#8c8c8c] bg-white">
			<Svg w={6} h={1}><path d="M0 .5h6" stroke="#555" /></Svg>
		</button>
	);
}

// vertical guide with the horizontal branch that leads to a leaf
function Branch({ last }: { last?: boolean }) {
	return (
		<span className="flex h-full w-5 shrink-0 flex-col">
			<span className="h-1/2 border-b border-l border-[#dedede]" />
			<span className={last ? "h-1/2" : "h-1/2 border-l border-[#dedede]"} />
		</span>
	);
}

const drawings = [
	"桩基平面布置图",
	"底板平面布置图",
	"基础顶~首层板面柱平...",
	"首层板面~二层板面柱...",
	"二层板面~五层板面柱...",
	"五层板面~屋面层板面...",
	"首层板平面布置图",
	"二层~五层板平面布置图",
	"屋面层板平面布置图",
	"首层梁平面布置图",
	"二层~五层梁平面布置图",
	"屋面层梁平面布置图",
	"承台详图",
	"柱表",
];

function DrawingPanel() {
	const selected = 2;
	return (
		<aside className="ml-[5px] flex w-[305px] shrink-0 flex-col border border-[#c3c6ca] bg-white">
			<PanelStrip />
			<div className="flex h-[28px] border-b border-[#c3c6ca] bg-[#eeeeef] text-[15px] leading-[27px]">
				<button type="button" className="w-[80px] border-r border-[#c3c6ca] bg-[#e1e1e2] text-[#888]">构件列表</button>
				<button type="button" className="w-[82px] border-r border-[#c3c6ca] bg-[#f2f2f2] font-medium text-[#222]">图纸管理</button>
			</div>
			<div className="flex h-[35px] items-center border-b border-[#c3c6ca] bg-[#eeeeef] pl-1.5 text-[15px] leading-6 whitespace-nowrap text-[#444]">
				<button type="button" className="flex items-center gap-1"><AddSheetIcon />添加图纸<span className="ml-1"><Caret /></span></button>
				<button type="button" className="ml-2 flex items-center gap-1"><SplitIcon />分割<span className="ml-1"><Caret /></span></button>
				<button type="button" className="ml-2.5 flex items-center gap-1"><LocateIcon />定位</button>
				<button type="button" aria-label="更多" className="ml-auto mr-1 flex">
					<Svg w={10} h={8}><path d="m0 0 5 4-5 4zM5 0l5 4-5 4z" fill="#333" /></Svg>
				</button>
			</div>
			<div className="flex-1 overflow-hidden">
				<table className="h-[425px] w-[345px] table-fixed border-separate border-spacing-0 text-[15px] leading-5 text-[#222]">
					<thead>
						<tr className="h-[31px]">
							<th className="w-[213px] border-r border-b border-[#5aa5f7] bg-[#7fb9f9] font-bold text-white">名称</th>
							<th className="w-[45px] border-r border-b border-[#d3d5d8] bg-[#eeeeef] font-normal text-[#444]">锁定</th>
							<th className="border-b border-[#d3d5d8] bg-[#eeeeef] pl-[7px] text-left font-normal text-[#444]">对应楼层</th>
						</tr>
					</thead>
					<tbody>
						<tr>
							<td className="h-[26px] border-r border-b border-[#d6d6d8] p-0">
								<div className="flex items-center gap-2 pl-0.5 whitespace-nowrap"><Minus />停车楼结构施工图-2019....</div>
							</td>
							<td className="border-r border-b border-[#d6d6d8] p-0"><div className="flex justify-center"><LockIcon /></div></td>
							<td className="border-b border-[#d6d6d8] p-0" />
						</tr>
						{drawings.map((d, i) => (
							<tr key={d} className={i === selected ? "bg-[#d3e7fd]" : ""}>
								<td className={i === selected ? "h-[26px] border-2 border-[#808285] p-0" : "h-[26px] border-r border-b border-[#d6d6d8] p-0"}>
									<div className={`flex h-full items-center gap-2 whitespace-nowrap ${i === selected ? "pl-2" : "pl-2.5"}`}>
										<Branch last={i === drawings.length - 1} />
										{d}
									</div>
								</td>
								<td className="border-r border-b border-[#d6d6d8] p-0"><div className="flex justify-center"><LockIcon /></div></td>
								<td className="border-b border-[#d6d6d8] p-0" />
							</tr>
						))}
					</tbody>
				</table>
			</div>
			<div className="mb-1 ml-[17px] h-2.5 w-[179px] rounded-full bg-[#cacaca]" />
		</aside>
	);
}

function Grip({ flip }: { flip?: boolean }) {
	return (
		<div className={`flex shrink-0 flex-col pt-[331px] ${flip ? "w-1.5" : "w-[5px]"}`}>
			<div className="flex h-[125px] items-center bg-[#606b78]">
				<Svg w={5} h={8}>
					<path d={flip ? "M0 0v8l4-4z" : "M5 0v8L1 4z"} fill="#c6cad0" />
				</Svg>
			</div>
		</div>
	);
}

/* ---------- drawing area ---------- */

const bubbles = [
	{ x: 266, y: 16, t: "15" },
	{ x: 631, y: 16, t: "16" },
	{ x: 913, y: 16, t: "17" },
	{ x: 15, y: 197, t: "C" },
	{ x: 15, y: 479, t: "B" },
	{ x: 15, y: 658, t: "A" },
	{ x: 1085, y: 658, t: "A" },
	{ x: 176, y: 770, t: "14" },
	{ x: 631, y: 770, t: "16" },
	{ x: 913, y: 770, t: "17" },
];

const hatches = [
	{ c: "#7a12e8", d: "M160 179v36M170 179v36M180 179v36M190 179v36M158 186h36M158 196h36M158 206h36" },
	{ c: "#7a12e8", d: "M620 161v36M630 161v36M640 161v36M613 166h37M613 176h37M613 186h37M613 196h37" },
	{ c: "#2cc4c4", d: "M870 161v36M880 161v36M890 161v36M900 161v36M910 161v36M865 166h48M865 176h48M865 186h48M865 196h48" },
	{ c: "#2f86cf", d: "M159 634v36M169 634v36M180 634v36M190 634v36M158 636h37M158 646h37M158 656h37M158 666h37" },
	{ c: "#2cc4b8", d: "M620 634v36M630 634v36M640 634v36M650 634v36M613 636h37M613 646h37M613 656h37M613 666h37" },
	{ c: "#2f86cf", d: "M880 634v36M890 634v36M900 634v36M911 634v36M877 636h36M877 646h36M877 656h36M877 666h36" },
];

function bubbleOutline(x: number, y: number) {
	const pts: string[] = [];
	for (let i = 0; i < 10; i++) {
		const a = (i * Math.PI) / 5 - Math.PI / 2;
		pts.push(`${Math.round(x + 15 * Math.cos(a))},${Math.round(y + 15 * Math.sin(a))}`);
	}
	return pts.join(" ");
}

function Viewport() {
	return (
		<main className="relative min-w-0 flex-1 overflow-hidden bg-black">
			<svg width="100%" height="100%" fill="none" className="block" role="img" aria-label="轴网平面">
				<g stroke="#007a00" strokeWidth="1.500">
					<path d="M0 748h913M176 658v127M631 658v127M913 658v127" />
					<path d="M913 197h187M913 658h187M1002 0v658M1092 0v658" />
					<path d="M168 756l17-17M623 756l17-17M905 756l17-17M994 189l17 17M994 650l17 17M1084 650l16 16" />
					{bubbles.map((b, i) => (
						<polygon key={i} points={bubbleOutline(b.x, b.y)} />
					))}
				</g>
				<path d="M176 48v610M631 0v658M913 0v658" stroke="#a80000" strokeWidth="1.500" />
				<path d="M0 197h913M0 658h913" stroke="#e00000" strokeWidth="1.500" />
				{hatches.map((h, i) => (
					<path key={i} d={h.d} stroke={h.c} strokeWidth="1.300" />
				))}
				<g fill="#e8e8e8" fontSize="21" textAnchor="middle">
					{bubbles.map((b, i) => (
						<text key={i} x={b.x} y={b.y + 8}>{b.t}</text>
					))}
					<text transform="translate(1056 428) rotate(-90)">7700</text>
					<text x="403" y="799">7600</text>
					<text x="773" y="799">4700</text>
				</g>
				<path d="M63 720v-22" stroke="#00f000" strokeWidth="5" />
				<path d="m63 686 6 15H57z" fill="#00f000" />
				<path d="M58 670l5 8 5-8M63 678v9" stroke="#00f000" strokeWidth="2" />
				<path d="M68 723h20" stroke="#ff0000" strokeWidth="6" />
				<path d="m86 716 15 7-15 7z" fill="#ff0000" />
				<path d="m103 716 10 14M113 716l-10 14" stroke="#ff0000" strokeWidth="2" />
				<circle cx="63" cy="723" r="7" fill="#0000c0" />
			</svg>
			<div className="absolute top-0 right-0 flex h-[284px] w-[41px] flex-col items-center rounded-b bg-[#96989c] pt-[15px]">
				<button type="button" aria-label="动态观察"><GrayOrbit /></button>
				<button type="button" aria-label="三维" className="mt-2"><GrayCube text="3D" /></button>
				<button type="button" aria-label="俯视" className="mt-[7px]"><GrayCube wire /></button>
				<span className="mt-[7px]"><Caret color={DARK} /></span>
				<button type="button" aria-label="实体" className="mt-[7px]"><GrayCube /></button>
				<span className="mt-[7px]"><Caret color={DARK} /></span>
				<button type="button" aria-label="旋转" className="mt-[7px]"><GrayRotate /></button>
				<span className="mt-[7px]"><Caret color={DARK} /></span>
				<span className="mt-[7px] h-px w-[30px] shrink-0 bg-[#6d6f73]" />
				<button type="button" aria-label="显示设置" className="mt-[7px]"><GraySettings /></button>
			</div>
		</main>
	);
}

/* ---------- display settings ---------- */

type Row = { name: string; level: number; show: "on" | "off" | "some"; locked?: boolean };

const rows: Row[] = [
	{ name: "所有构件", level: 0, show: "some" },
	{ name: "轴线", level: 1, show: "on", locked: true },
	{ name: "轴网", level: 2, show: "on", locked: true },
	{ name: "辅助轴线", level: 2, show: "on", locked: true },
	{ name: "柱", level: 1, show: "on" },
	{ name: "柱", level: 2, show: "on" },
	{ name: "构造柱", level: 2, show: "on" },
	{ name: "砌体柱", level: 2, show: "on" },
	{ name: "墙", level: 1, show: "some" },
	{ name: "剪力墙", level: 2, show: "on" },
	{ name: "人防门框墙", level: 2, show: "on" },
	{ name: "砌体墙", level: 2, show: "on" },
	{ name: "砌体加筋", level: 2, show: "off" },
	{ name: "保温墙", level: 2, show: "on" },
	{ name: "暗梁", level: 2, show: "off" },
	{ name: "墙垛", level: 2, show: "off" },
	{ name: "幕墙", level: 2, show: "on" },
	{ name: "门窗洞", level: 1, show: "off" },
	{ name: "门", level: 2, show: "off" },
	{ name: "窗", level: 2, show: "off" },
	{ name: "门联窗", level: 2, show: "off" },
	{ name: "墙洞", level: 2, show: "off" },
	{ name: "带形窗", level: 2, show: "off" },
	{ name: "带形洞", level: 2, show: "off" },
];

function Check({ label, state, disabled }: { label: string; state: Row["show"]; disabled?: boolean }) {
	return (
		<span className="mx-auto grid h-[18px] w-[18px] place-items-center">
			<input
				type="checkbox"
				aria-label={label}
				defaultChecked={state === "on"}
				disabled={disabled}
				className="peer col-start-1 row-start-1 h-[18px] w-[18px] appearance-none rounded-[3px] border border-[#8c8c8c] bg-white checked:border-[#55a3f8] checked:bg-[#55a3f8] disabled:border-[#b0b0b0] disabled:bg-[#eeeeee]"
			/>
			<svg width="12" height="10" viewBox="0 0 12 10" fill="none" className="pointer-events-none invisible col-start-1 row-start-1 peer-checked:visible">
				<path d="m1 4.500 3.500 3.500L11 1.500" stroke="#fff" strokeWidth="2.500" />
			</svg>
			{state === "some" && <span className="pointer-events-none col-start-1 row-start-1 h-3.5 w-3.5 rounded-xs border border-[#55a3f8] bg-[#9cc8fb]" />}
		</span>
	);
}

function isLastLeaf(i: number) {
	return i + 1 < rows.length && rows[i + 1].level < 2;
}

function DisplayPanel() {
	const cell = "border-r border-b border-[#d6d6d8] p-0";
	return (
		<aside className="flex w-[337px] shrink-0 flex-col border border-[#c3c6ca] bg-white">
			<PanelStrip />
			<h2 className="h-[27px] border-b border-[#c3c6ca] bg-[#eeeeef] pl-2.5 text-[15px] leading-[25px] text-[#888]">显示设置</h2>
			<div className="flex h-[35px] items-end gap-1 border-b border-[#c3c6ca] bg-[#eeeeef] pl-[3px] text-[15px] leading-[30px]">
				<button type="button" className="-mb-px h-[31px] w-[94px] rounded-t border border-b-0 border-[#c3c6ca] bg-white text-[#2f82e0]">图元显示</button>
				<button type="button" className="h-7 w-[92px] rounded-t bg-[#dededf] leading-[28px] text-[#555]">楼层显示</button>
			</div>
			<div className="mx-[3px] mt-[3px] flex min-h-0 flex-1 overflow-hidden border border-[#c3c6ca]">
				<table className="h-[calc(100%+1px)] flex-1 table-fixed border-separate border-spacing-0 text-[15px] leading-5 text-[#222]">
					<thead>
						<tr>
							<th className={`h-[25px] w-[152px] bg-[#eeeeef] font-normal text-[#444] ${cell}`}>图层构件</th>
							<th className={`w-[79px] bg-[#eeeeef] font-normal text-[#444] ${cell}`}>显示图元</th>
							<th className={`w-[79px] bg-[#eeeeef] font-normal text-[#444] ${cell}`}>显示名称</th>
						</tr>
					</thead>
					<tbody>
						{rows.map((r, i) => (
							<tr key={i}>
								<td className={`h-[25px] ${cell}`}>
									<div className="flex h-full items-center whitespace-nowrap">
										{r.level === 0 && <span className="mr-[7px] ml-0.5 flex"><Minus /></span>}
										{r.level > 0 && <span className={`ml-2.5 h-full border-l border-[#dedede] ${r.level === 1 ? "w-1" : "w-3"}`} />}
										{r.level === 1 && <span className="mr-2 flex"><Minus /></span>}
										{r.level === 2 && <span className="mr-2 flex h-full"><Branch last={isLastLeaf(i)} /></span>}
										{r.name}
									</div>
								</td>
								<td className={cell}><Check label={`${r.name} 显示图元`} state={r.show} /></td>
								<td className={cell}><Check label={`${r.name} 显示名称`} state="off" disabled={r.locked} /></td>
							</tr>
						))}
					</tbody>
				</table>
				<div className="w-[18px] shrink-0 pt-[17px] pl-1">
					<div className="h-[122px] w-2.5 rounded-full bg-[#c9c9c9]" />
				</div>
			</div>
			<div className="flex h-12 shrink-0 items-center justify-end pr-2.5">
				<button type="button" className="h-8 w-28 rounded border border-[#cfcfcf] bg-white text-[15px] leading-6 text-[#222]">恢复默认设置</button>
			</div>
		</aside>
	);
}

/* ---------- status bar ---------- */

function ToolButton({ label, active, caret, children }: { label: string; active?: boolean; caret?: boolean; children: ReactNode }) {
	return (
		<button
			type="button"
			aria-label={label}
			className={`flex h-8 items-center justify-center gap-2 border ${caret ? "w-[45px]" : "w-[31px]"} ${active ? "border-[#5aa5f7] bg-white" : "border-[#a9a9ab] bg-[#d0d0d2]"}`}
		>
			{children}
			{caret && <Caret />}
		</button>
	);
}

function StatusBar() {
	return (
		<footer className="flex h-[37px] shrink-0 items-center bg-[#dddddf] text-[15px] leading-6 whitespace-nowrap text-[#444]">
			<span className="w-[331px] pl-0.5 text-base">X = 238296 Y = 1487271</span>
			<span className="w-[50px]">层高：</span>
			<span className="w-[53px]">4.95</span>
			<span className="w-[51px]">标高：</span>
			<span className="w-[116px]">-5~-0.05</span>
			<span className="w-[129px]">0</span>
			<span className="w-[45px]">隐藏：</span>
			<span className="w-[83px]">0</span>
			<div className="flex items-center gap-1">
				<ToolButton label="正交">
					<Svg w={18} h={18}><path d="M1.500 1v15.500H17M1.500 10h6v6" stroke="#444" strokeWidth="1.300" /></Svg>
				</ToolButton>
				<ToolButton label="矩形" active caret>
					<Svg w={20} h={20}><path d="M3 3h15v16H3z" stroke={BLUE} /><path d="M0 0h6v6H0z" fill="#f9b183" stroke={ORANGE} /></Svg>
				</ToolButton>
				<span />
				<ToolButton label="交点">
					<Svg w={20} h={20}><path d="m1 1 18 18M19 1 1 19" stroke="#444" /><path d="M8.500 8.500h3v3h-3z" fill="#444" /></Svg>
				</ToolButton>
				<span />
				<ToolButton label="角度" caret>
					<Svg w={20} h={18}><path d="M15 1 1 16.500h19" stroke="#444" strokeWidth="1.300" /><path d="M6.500 7h4v4h-4z" fill="#444" /></Svg>
				</ToolButton>
				<ToolButton label="偏移" caret>
					<Svg w={20} h={18}><path d="M4 1v8M0 5h8" stroke="#444" strokeWidth="1.300" /><path d="M8 11h12v6H8z" fill="#444" /></Svg>
				</ToolButton>
				<button type="button" className="h-8 w-[91px] border border-[#a9a9ab] bg-[#d0d0d2]">跨图层选择</button>
				<button type="button" className="h-8 w-[76px] border border-[#a9a9ab] bg-[#d0d0d2]">折线选择</button>
			</div>
			<span className="ml-[7px] flex-1">按鼠标左键指定第一个角点，或拾取构件图元</span>
			<span className="pr-4">333.333 FPS</span>
		</footer>
	);
}

function Taskbar() {
	return (
		<div className="flex h-[11px] shrink-0 overflow-hidden border-t border-white bg-[#222428]">
			<div className="ml-[60px] w-[430px] bg-[#f0f0f0]" />
			<div className="ml-[188px] w-[61px] bg-[#505254]" />
			<span className="mr-[86px] ml-auto text-[15px] leading-5 text-white">20:54</span>
			<div className="mr-1 w-px bg-[#77797c]" />
		</div>
	);
}

export default function App() {
	return (
		<div className="flex h-screen w-full flex-col overflow-hidden bg-white font-['Noto_Sans','Noto_Sans_CJK_SC',sans-serif]">
			<Header />
			<Ribbon />
			<Selectors />
			<div className="flex min-h-0 flex-1">
				<NavPanel />
				<DrawingPanel />
				<Grip />
				<Viewport />
				<Grip flip />
				<DisplayPanel />
			</div>
			<StatusBar />
			<Taskbar />
		</div>
	);
}
